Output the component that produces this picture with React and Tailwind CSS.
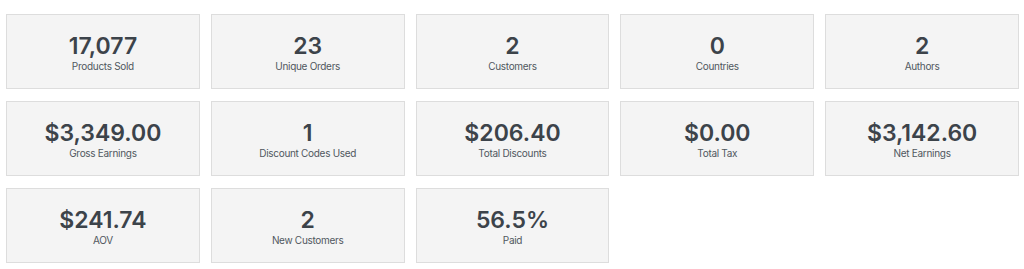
const stats = [
  { value: '17,077', label: 'Products Sold' },
  { value: '23', label: 'Unique Orders' },
  { value: '2', label: 'Customers' },
  { value: '0', label: 'Countries' },
  { value: '2', label: 'Authors' },
  { value: '$3,349.00', label: 'Gross Earnings' },
  { value: '1', label: 'Discount Codes Used' },
  { value: '$206.40', label: 'Total Discounts' },
  { value: '$0.00', label: 'Total Tax' },
  { value: '$3,142.60', label: 'Net Earnings' },
  { value: '$241.74', label: 'AOV' },
  { value: '2', label: 'New Customers' },
  { value: '56.5%', label: 'Paid' },
];

const StatCard = ({ value, label }) => (
  <div className="h-[75px] bg-[#f4f4f4] border border-[#dddddd] flex flex-col items-center justify-center pt-[4px]">
    <div className="text-[23px] leading-[24px] font-semibold text-[#3c434a]">{value}</div>
    <div className="text-[10px] leading-[13px] tracking-[-0.3px] text-[#50575e] mt-[2px]">{label}</div>
  </div>
);

export default function App() {
  return (
    <div
      className="w-[1024px] h-[269px] bg-white pl-[6px] pr-[5px] pt-[14px]"
      style={{ fontFamily: 'Inter, "Noto Sans", sans-serif' }}
    >
      <div className="grid grid-cols-5 gap-x-[11px] gap-y-[12px]">
        {stats.map((s) => (
          <StatCard key={s.label} value={s.value} label={s.label} />
        ))}
      </div>
    </div>
  );
}
